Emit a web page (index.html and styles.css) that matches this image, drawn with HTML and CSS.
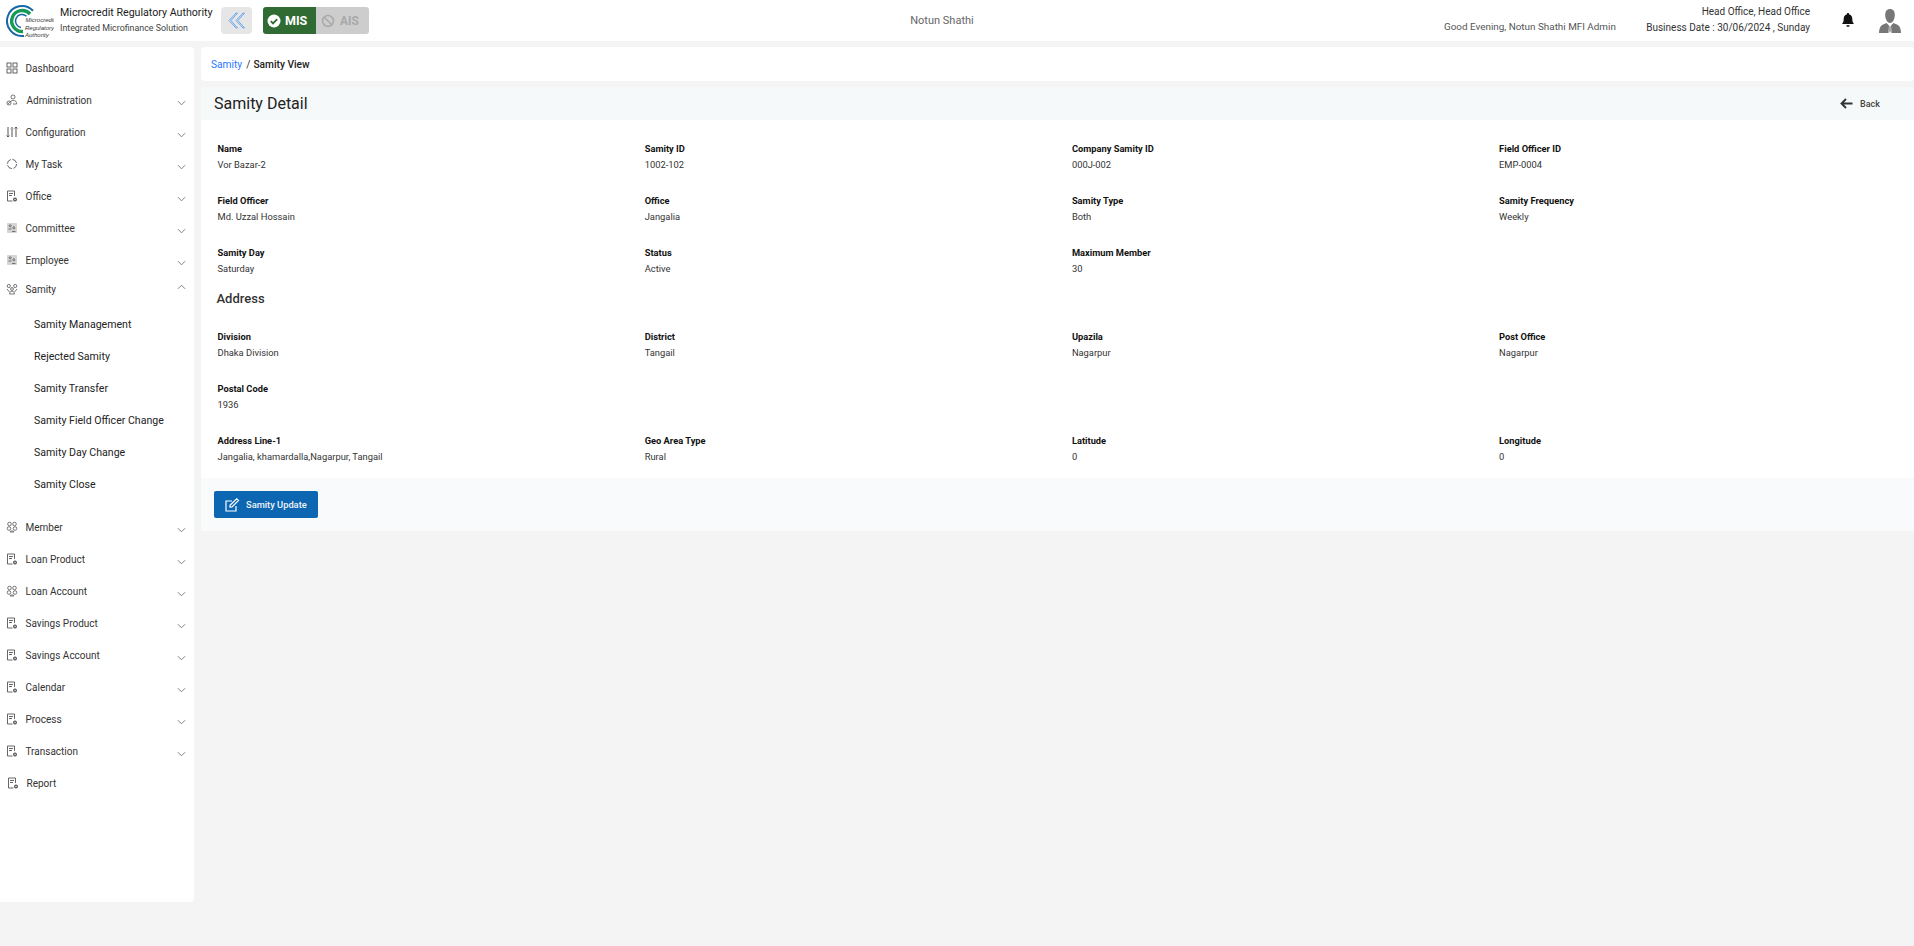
FILE: index.html
```html
<!DOCTYPE html>
<html lang="en">
<head>
<meta charset="utf-8">
<title>Samity View</title>
<link rel="stylesheet" href="styles.css">
</head>
<body>
<svg class="defs" width="0" height="0" aria-hidden="true">
  <defs>
    <symbol id="i-grid" viewBox="0 0 12 12"><g fill="none" stroke="#555" stroke-width=".9"><rect x="1" y="1" width="4" height="4"/><rect x="7" y="1" width="4" height="4"/><rect x="1" y="7" width="4" height="4"/><rect x="7" y="7" width="4" height="4"/></g></symbol>
    <symbol id="i-admin" viewBox="0 0 12 12"><g fill="none" stroke="#666" stroke-width=".9"><circle cx="7" cy="3" r="2"/><path d="M4 8c.5-1.700 5-2 6-.5.500.800.600 1.500.600 2.500H7"/><circle cx="3" cy="9" r="2"/><path d="M1.700 10.300l2.600-2.600"/></g></symbol>
    <symbol id="i-config" viewBox="0 0 12 12"><g fill="none" stroke="#555" stroke-width="1"><path d="M2 1v10M.7 9.500 2 11l1.300-1.500M6 4v7M4.700 3h2.600M6 1v1M10 1v10M8.700 2.500 10 1l1.300 1.500"/></g></symbol>
    <symbol id="i-task" viewBox="0 0 12 12"><circle cx="6" cy="6" r="4.600" fill="none" stroke="#666" stroke-width="1" stroke-dasharray="5.500 1.700"/></symbol>
    <symbol id="i-doc" viewBox="0 0 12 12"><g fill="none" stroke="#555" stroke-width=".9"><path d="M8.500 6V1H1.500v10h5"/><path d="M3 3.500h4M3 5.500h3"/></g><circle cx="9" cy="9.500" r="2" fill="#555"/><circle cx="9" cy="9.500" r=".7" fill="#fff"/></symbol>
    <symbol id="i-people" viewBox="0 0 12 12"><rect x="1" y="1" width="10" height="10" rx="1" fill="#d4d4d4"/><g fill="none" stroke="#555" stroke-width=".8"><circle cx="4.200" cy="3.800" r="1"/><circle cx="7.800" cy="5.800" r="1"/><path d="M2.500 7h3M6 9.500h3.500"/></g></symbol>
    <symbol id="i-samity" viewBox="0 0 12 12"><g fill="none" stroke="#555" stroke-width=".8"><circle cx="2.800" cy="3" r="1.600"/><circle cx="9.200" cy="3" r="1.600"/><path d="M1 6l2.500 3M11 6 8.500 9"/><circle cx="6" cy="6" r="1.400"/><path d="M3.500 11c.3-2 1-2.800 2.500-2.800s2.200.8 2.500 2.800z"/></g></symbol>
    <symbol id="i-member" viewBox="0 0 12 12"><g fill="none" stroke="#555" stroke-width=".8"><circle cx="3.500" cy="3" r="1.800"/><circle cx="8.500" cy="3" r="1.800"/><circle cx="3" cy="7.500" r="1.800"/><circle cx="9" cy="7.500" r="1.800"/><path d="M4 11c0-1.500 4-1.500 4 0z"/></g></symbol>
    <symbol id="i-down" viewBox="0 0 10 6"><path d="M1 1l4 4 4-4" fill="none" stroke="#666" stroke-width=".9"/></symbol>
    <symbol id="i-up" viewBox="0 0 10 6"><path d="M1 5l4-4 4 4" fill="none" stroke="#666" stroke-width=".9"/></symbol>
  </defs>
</svg>

<header class="topbar">
  <svg class="logo" viewBox="0 0 48 34" aria-label="Microcredit Regulatory Authority logo">
    <g fill="none">
      <path d="M18 31.900A15 15 0 1 1 27 6.800" stroke="#1668a8" stroke-width="2"/>
      <path d="M17 27.500A10.500 10.500 0 1 1 24 10" stroke="#169a56" stroke-width="3.400"/>
      <path d="M15 23.400A6.500 6.500 0 1 1 20.500 12.300" stroke="#1668a8" stroke-width="1.500"/>
    </g>
    <text class="logo-text" x="19.500" y="18">Microcredit</text>
    <text class="logo-text" x="19" y="25.500">Regulatory</text>
    <text class="logo-text" x="19" y="33">Authority</text>
  </svg>
  <div class="brand">
    <div class="brand-name">Microcredit Regulatory Authority</div>
    <div class="brand-sub">Integrated Microfinance Solution</div>
  </div>
  <button class="collapse" type="button" aria-label="Collapse menu">
    <svg width="18" height="17" viewBox="0 0 18 17"><g fill="none" stroke="#5aa0ee" stroke-width=".9"><path d="M8 1 1 8.500 8 16h1.500L3 8.500 9.500 1z"/><path d="M15 1 8 8.500 15 16h1.500L10 8.500 16.500 1z"/></g></svg>
  </button>
  <div class="modes">
    <span class="mode mode-on">
      <svg width="14" height="14" viewBox="0 0 14 14"><circle cx="7" cy="7" r="6.500" fill="#fff"/><path d="M3.800 7.200l2.200 2.200 4.200-4.200" fill="none" stroke="#2f6b33" stroke-width="1.800"/></svg>
      MIS
    </span>
    <span class="mode mode-off">
      <svg width="14" height="14" viewBox="0 0 14 14"><g fill="none" stroke="#a8a8a8" stroke-width="1.500"><circle cx="7" cy="7" r="5.500"/><path d="M3.200 3.200l7.600 7.600"/></g></svg>
      AIS
    </span>
  </div>
  <div class="org">Notun Shathi</div>
  <div class="greeting">Good Evening, Notun Shathi MFI Admin</div>
  <div class="office">
    <div>Head Office, Head Office</div>
    <div>Business Date : 30/06/2024 , Sunday</div>
  </div>
  <svg class="bell" width="14" height="15" viewBox="0 0 14 15"><path d="M7 0c.7 0 1.100.5 1.100 1.200C10.300 1.800 11.300 3.600 11.300 6c0 2.600.6 3.800 1.700 5H1c1.100-1.200 1.700-2.400 1.700-5 0-2.400 1-4.200 3.200-4.800C5.900.5 6.300 0 7 0z" fill="#111"/><path d="M5.300 12.300h3.400C8.500 13.400 7.900 14 7 14s-1.500-.6-1.700-1.700z" fill="#111"/></svg>
  <svg class="avatar" width="22" height="24" viewBox="0 0 22 24"><path d="M11 0c3.200 0 4.800 2.200 4.800 6 0 3.500-1.800 8-4.800 8S6.200 9.500 6.200 6C6.200 2.200 7.800 0 11 0z" fill="#777"/><path d="M7.500 14 10 16.500 9.500 24H0c0-3 .8-6.500 3-8zM14.500 14 12 16.500l.5 7.500H22c0-3-.8-6.500-3-8z" fill="#777"/><path d="M10.300 17h1.400l.6 4.500L11 24l-1.300-2.500z" fill="#aaa"/></svg>
</header>

<div class="layout">
  <nav class="sidebar">
    <a class="nav-item"><svg class="nav-icon"><use href="#i-grid"/></svg><span class="nav-label">Dashboard</span></a>
    <a class="nav-item"><svg class="nav-icon"><use href="#i-admin"/></svg><span class="nav-label nav-label-wide">Administration</span><svg class="chev"><use href="#i-down"/></svg></a>
    <a class="nav-item"><svg class="nav-icon"><use href="#i-config"/></svg><span class="nav-label">Configuration</span><svg class="chev"><use href="#i-down"/></svg></a>
    <a class="nav-item"><svg class="nav-icon"><use href="#i-task"/></svg><span class="nav-label">My Task</span><svg class="chev"><use href="#i-down"/></svg></a>
    <a class="nav-item"><svg class="nav-icon"><use href="#i-doc"/></svg><span class="nav-label">Office</span><svg class="chev"><use href="#i-down"/></svg></a>
    <a class="nav-item"><svg class="nav-icon"><use href="#i-people"/></svg><span class="nav-label">Committee</span><svg class="chev"><use href="#i-down"/></svg></a>
    <a class="nav-item"><svg class="nav-icon"><use href="#i-people"/></svg><span class="nav-label">Employee</span><svg class="chev"><use href="#i-down"/></svg></a>
    <a class="nav-item nav-item-open"><svg class="nav-icon"><use href="#i-samity"/></svg><span class="nav-label">Samity</span><svg class="chev chev-up"><use href="#i-up"/></svg></a>
    <div class="submenu">
      <a class="sub-item">Samity Management</a>
      <a class="sub-item">Rejected Samity</a>
      <a class="sub-item">Samity Transfer</a>
      <a class="sub-item">Samity Field Officer Change</a>
      <a class="sub-item">Samity Day Change</a>
      <a class="sub-item">Samity Close</a>
    </div>
    <a class="nav-item"><svg class="nav-icon"><use href="#i-member"/></svg><span class="nav-label">Member</span><svg class="chev"><use href="#i-down"/></svg></a>
    <a class="nav-item"><svg class="nav-icon"><use href="#i-doc"/></svg><span class="nav-label">Loan Product</span><svg class="chev"><use href="#i-down"/></svg></a>
    <a class="nav-item"><svg class="nav-icon"><use href="#i-member"/></svg><span class="nav-label">Loan Account</span><svg class="chev"><use href="#i-down"/></svg></a>
    <a class="nav-item"><svg class="nav-icon"><use href="#i-doc"/></svg><span class="nav-label">Savings Product</span><svg class="chev"><use href="#i-down"/></svg></a>
    <a class="nav-item"><svg class="nav-icon"><use href="#i-doc"/></svg><span class="nav-label">Savings Account</span><svg class="chev"><use href="#i-down"/></svg></a>
    <a class="nav-item"><svg class="nav-icon"><use href="#i-doc"/></svg><span class="nav-label">Calendar</span><svg class="chev"><use href="#i-down"/></svg></a>
    <a class="nav-item"><svg class="nav-icon"><use href="#i-doc"/></svg><span class="nav-label">Process</span><svg class="chev"><use href="#i-down"/></svg></a>
    <a class="nav-item"><svg class="nav-icon"><use href="#i-doc"/></svg><span class="nav-label">Transaction</span><svg class="chev"><use href="#i-down"/></svg></a>
    <a class="nav-item nav-item-report"><svg class="nav-icon"><use href="#i-doc"/></svg><span class="nav-label">Report</span></a>
  </nav>

  <main class="content">
    <div class="breadcrumb"><a class="crumb-link">Samity</a><span class="crumb-sep">/</span><span class="crumb-current">Samity View</span></div>
    <section class="card">
      <div class="card-head">
        <h1 class="card-title">Samity Detail</h1>
        <a class="back">
          <svg width="13" height="11" viewBox="0 0 13 11"><path d="M12.500 5.500H2M6 1 1.500 5.500 6 10" fill="none" stroke="#333" stroke-width="1.900"/></svg>
          <span>Back</span>
        </a>
      </div>
      <div class="card-body">
        <div class="fields">
          <div class="field"><div class="field-label">Name</div><div class="field-value">Vor Bazar-2</div></div>
          <div class="field"><div class="field-label">Samity ID</div><div class="field-value">1002-102</div></div>
          <div class="field"><div class="field-label">Company Samity ID</div><div class="field-value">000J-002</div></div>
          <div class="field"><div class="field-label">Field Officer ID</div><div class="field-value">EMP-0004</div></div>
          <div class="field"><div class="field-label">Field Officer</div><div class="field-value">Md. Uzzal Hossain</div></div>
          <div class="field"><div class="field-label">Office</div><div class="field-value">Jangalia</div></div>
          <div class="field"><div class="field-label">Samity Type</div><div class="field-value">Both</div></div>
          <div class="field"><div class="field-label">Samity Frequency</div><div class="field-value">Weekly</div></div>
          <div class="field"><div class="field-label">Samity Day</div><div class="field-value">Saturday</div></div>
          <div class="field"><div class="field-label">Status</div><div class="field-value">Active</div></div>
          <div class="field"><div class="field-label">Maximum Member</div><div class="field-value">30</div></div>
        </div>
        <h2 class="section-title">Address</h2>
        <div class="fields">
          <div class="field"><div class="field-label">Division</div><div class="field-value">Dhaka Division</div></div>
          <div class="field"><div class="field-label">District</div><div class="field-value">Tangail</div></div>
          <div class="field"><div class="field-label">Upazila</div><div class="field-value">Nagarpur</div></div>
          <div class="field"><div class="field-label">Post Office</div><div class="field-value">Nagarpur</div></div>
          <div class="field field-full"><div class="field-label">Postal Code</div><div class="field-value">1936</div></div>
          <div class="field"><div class="field-label">Address Line-1</div><div class="field-value">Jangalia, khamardalla,Nagarpur, Tangail</div></div>
          <div class="field"><div class="field-label">Geo Area Type</div><div class="field-value">Rural</div></div>
          <div class="field"><div class="field-label">Latitude</div><div class="field-value">0</div></div>
          <div class="field"><div class="field-label">Longitude</div><div class="field-value">0</div></div>
        </div>
      </div>
      <div class="card-foot">
        <button class="btn-update" type="button">
          <svg width="15" height="14" viewBox="0 0 15 14"><g fill="none" stroke="#fff" stroke-width="1.200"><path d="M11 8v5H1V3h6"/><path d="M5 7.200 5 9.200 7 9 13.500 2.500 11.700.8z"/></g></svg>
          <span>Samity Update</span>
        </button>
      </div>
    </section>
  </main>
</div>
</body>
</html>
```

FILE: styles.css
```css
* { box-sizing: border-box; }

html, body { height: 100%; }

body {
  margin: 0;
  background: #f4f4f4;
  font-family: Roboto, "Liberation Sans", sans-serif;
  color: #222;
  overflow: hidden;
}

.defs { position: absolute; }

.topbar {
  height: 41px;
  background: #fff;
  display: flex;
  align-items: center;
  padding-left: 6px;
}

.logo { width: 48px; height: 34px; flex: none; }
.logo-text { font-family: "Liberation Sans", sans-serif; font-size: 6px; font-style: italic; fill: #333; }

.brand { margin: -1px 0 0 6px; width: 161px; flex: none; white-space: nowrap; }
.brand-name { font-size: 10.650px; line-height: 15px; color: #1c1c1c; }
.brand-sub { font-size: 8.850px; line-height: 14px; color: #444; margin-top: 1px; }

.collapse {
  width: 31px;
  height: 27px;
  border: 0;
  padding: 0;
  border-radius: 4px;
  background: #e6e6e6;
  display: flex;
  align-items: center;
  justify-content: center;
  flex: none;
}

.modes {
  display: flex;
  height: 27px;
  margin-left: 11px;
  border-radius: 3px;
  overflow: hidden;
  flex: none;
}

.mode {
  width: 53px;
  display: flex;
  align-items: center;
  gap: 5px;
  padding-left: 5px;
  font-size: 12px;
  font-weight: 700;
}
.mode-on { background: #2f6b33; color: #fff; gap: 4px; padding-left: 4px; font-size: 12.500px; }
.mode-off { background: #cdcdcd; color: #a8a8a8; }

.org {
  margin-left: 498px;
  width: 150px;
  flex: none;
  text-align: center;
  font-size: 11px;
  color: #666;
}

.greeting {
  margin-left: 427px;
  padding-top: 12px;
  font-size: 9.900px;
  color: #555;
  width: 202px;
  flex: none;
}

.office {
  width: 164px;
  flex: none;
  margin-top: -1px;
  text-align: right;
  font-size: 10px;
  line-height: 16px;
  color: #333;
}

.bell { margin-left: 31px; flex: none; }
.avatar { margin-left: 24px; flex: none; }

.layout {
  display: flex;
  align-items: flex-start;
  gap: 7px;
  margin-top: 6px;
}

.sidebar {
  width: 194px;
  height: 855px;
  flex: none;
  padding-top: 5px;
  background: #fff;
  border-radius: 0 4px 4px 0;
}

.nav-item {
  height: 32px;
  display: flex;
  align-items: center;
  padding-left: 6px;
  position: relative;
}
.nav-item-open { height: 26px; }
.nav-item-report { padding-left: 7px; }

.nav-icon { width: 12px; height: 12px; flex: none; }
.nav-label { margin-left: 7.500px; font-size: 10px; color: #333; }
.nav-label-wide { margin-left: 8.500px; }

.chev {
  width: 9px;
  height: 6px;
  margin-left: auto;
  margin-right: 8px;
  margin-top: 6px;
  flex: none;
}
.chev-up { margin-top: -4px; }

.submenu { padding: 6px 0 11px; }
.sub-item {
  display: flex;
  align-items: center;
  height: 32px;
  padding-left: 34px;
  font-size: 10.600px;
  color: #222;
}

.content { flex: 1; min-width: 0; display: flex; flex-direction: column; gap: 6px; }

.breadcrumb {
  height: 34px;
  background: #fff;
  border-radius: 4px;
  display: flex;
  align-items: center;
  padding-left: 10px;
  font-size: 10.200px;
}
.crumb-link { color: #2979ff; }
.crumb-sep { margin: 0 3px 0 4px; color: #333; }
.crumb-current { color: #222; font-weight: 500; }

.card { background: #fff; }

.card-head {
  height: 33px;
  background: #f6f9fa;
  display: flex;
  align-items: center;
  justify-content: space-between;
  padding: 0 34px 0 13px;
}
.card-title { margin: 0; font-size: 16px; font-weight: 400; color: #222; }

.back {
  display: flex;
  align-items: center;
  gap: 7px;
  font-size: 9px;
  font-weight: 500;
  color: #444;
}

.card-body { padding: 20px 0 12px 16.500px; }

.fields {
  display: grid;
  grid-template-columns: repeat(4, 427.200px);
  row-gap: 18px;
}

.field { height: 34px; }
.field-full { grid-column: 1 / -1; }
.field-label { padding-top: 1px; font-size: 9.300px; line-height: 16px; font-weight: 700; color: #111; }
.field-value { font-size: 9.350px; line-height: 15px; color: #333; }

.section-title {
  margin: 11px 0 19px -1px;
  height: 20px;
  line-height: 20px;
  font-size: 13px;
  font-weight: 500;
  color: #333;
}

.card-foot {
  height: 53px;
  background: #f8fafc;
  display: flex;
  align-items: center;
  padding-left: 13px;
}

.btn-update {
  width: 104px;
  height: 27px;
  border: 0;
  border-radius: 2px;
  background: #0d66b2;
  color: #f0f4f8;
  display: flex;
  align-items: center;
  gap: 6px;
  padding: 0 0 0 11px;
  font-family: inherit;
  font-size: 9.300px;
  font-weight: 500;
}
```
